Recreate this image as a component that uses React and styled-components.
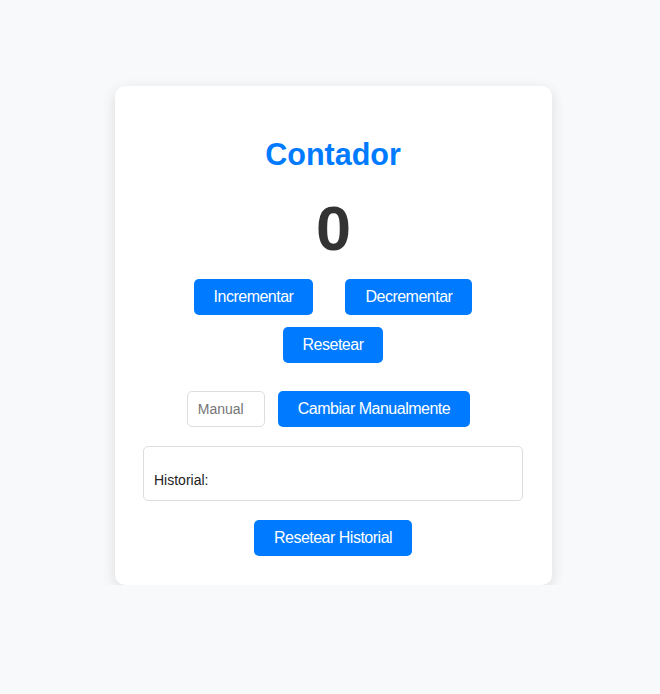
import React, { useState } from 'react';
import styled, { createGlobalStyle } from 'styled-components';

const GlobalStyle = createGlobalStyle`
  body {
    margin: 0;
    background-color: #f8f9fa;
    font-family: "Liberation Sans", Arial, sans-serif;
  }
`;

const Page = styled.div`
  display: flex;
  justify-content: center;
  padding: 86px 0 0 7px;
`;

const Card = styled.div`
  box-sizing: border-box;
  width: 437px;
  padding: 29px 29px 29px 28px;
  background-color: #fff;
  border-radius: 10px;
  box-shadow: 0 4px 14px rgba(0, 0, 0, 0.12);
  display: flex;
  flex-direction: column;
  align-items: center;
`;

const Title = styled.h1`
  margin: 21px 0 0;
  font-size: 30.5px;
  font-weight: 700;
  color: #007bff;
  line-height: 36px;
`;

const Count = styled.div`
  margin-top: 19px;
  font-size: 63px;
  font-weight: 700;
  line-height: 74px;
  color: #333;
  letter-spacing: -1px;
`;

const ButtonRow = styled.div`
  box-sizing: border-box;
  display: flex;
  flex-wrap: wrap;
  justify-content: center;
  column-gap: ${(p) => p.$gap || 32}px;
  row-gap: 12px;
  margin-top: ${(p) => p.$top || 0}px;
  padding-right: ${(p) => p.$trail || 0}px;
  width: 100%;
`;

const Button = styled.button`
  padding: 0 20px;
  height: 36px;
  border: none;
  border-radius: 5px;
  background-color: #007bff;
  color: #fff;
  font-family: inherit;
  font-size: 16px;
  letter-spacing: -0.5px;
  cursor: pointer;

  &:hover {
    background-color: #0069d9;
  }
`;

const ManualInput = styled.input`
  box-sizing: border-box;
  width: 78px;
  height: 36px;
  padding: 0 10px;
  border: 1px solid #ddd;
  border-radius: 5px;
  font-family: inherit;
  font-size: 14px;
  color: #333;

  &::placeholder {
    color: #757575;
  }
`;

const HistoryBox = styled.div`
  box-sizing: border-box;
  width: 100%;
  margin-top: 19px;
  padding: 25px 10px 12px;
  border: 1px solid #ddd;
  border-radius: 5px;
  font-size: 14px;
  line-height: 16px;
  color: #222;
`;

const HistoryLabel = styled.p`
  margin: 0;
`;

export default function App() {
  const [count, setCount] = useState(0);
  const [manual, setManual] = useState('');
  const [history, setHistory] = useState([]);

  const update = (value) => {
    setHistory((h) => [...h, value]);
    setCount(value);
  };

  return (
    <>
      <GlobalStyle />
      <Page>
        <Card>
          <Title>Contador</Title>
          <Count>{count}</Count>
          <ButtonRow $top={14}>
            <Button onClick={() => update(count + 1)}>Incrementar</Button>
            <Button onClick={() => update(count - 1)}>Decrementar</Button>
            <Button onClick={() => update(0)}>Resetear</Button>
          </ButtonRow>
          <ButtonRow $top={28} $gap={13} $trail={9}>
            <ManualInput
              type="text"
              inputMode="numeric"
              placeholder="Manual"
              value={manual}
              onChange={(e) => setManual(e.target.value)}
            />
            <Button onClick={() => manual !== '' && !isNaN(Number(manual)) && update(Number(manual))}>
              Cambiar Manualmente
            </Button>
          </ButtonRow>
          <HistoryBox>
            <HistoryLabel>Historial: {history.join(', ')}</HistoryLabel>
          </HistoryBox>
          <ButtonRow $top={19}>
            <Button onClick={() => setHistory([])}>Resetear Historial</Button>
          </ButtonRow>
        </Card>
      </Page>
    </>
  );
}
